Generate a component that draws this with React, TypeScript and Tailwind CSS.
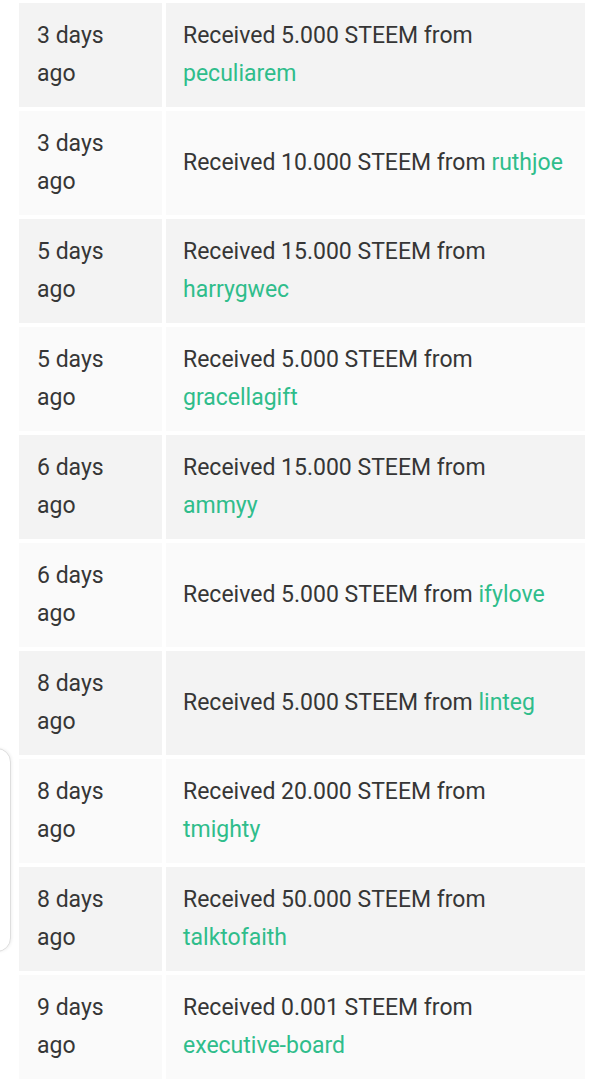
const rows: { when: string; amount: string; from: string; wrap: boolean }[] = [
  { when: '3 days ago', amount: '5.000', from: 'peculiarem', wrap: true },
  { when: '3 days ago', amount: '10.000', from: 'ruthjoe', wrap: false },
  { when: '5 days ago', amount: '15.000', from: 'harrygwec', wrap: true },
  { when: '5 days ago', amount: '5.000', from: 'gracellagift', wrap: true },
  { when: '6 days ago', amount: '15.000', from: 'ammyy', wrap: true },
  { when: '6 days ago', amount: '5.000', from: 'ifylove', wrap: false },
  { when: '8 days ago', amount: '5.000', from: 'linteg', wrap: false },
  { when: '8 days ago', amount: '20.000', from: 'tmighty', wrap: true },
  { when: '8 days ago', amount: '50.000', from: 'talktofaith', wrap: true },
  { when: '9 days ago', amount: '0.001', from: 'executive-board', wrap: true },
]

export default function App() {
  return (
    <div
      className="relative w-[599px] h-[1080px] overflow-hidden bg-white text-[23px] leading-[38px] text-[#363636]"
      style={{ fontFamily: 'Roboto, "Noto Sans", sans-serif' }}
    >
      {/* edge of a card peeking in from the left */}
      <div className="absolute left-[-22px] top-[748px] w-[33px] h-[204px] rounded-r-[14px] border border-[#dedede] bg-white shadow-[1px_0_3px_rgba(0,0,0,0.06)]" />

      <div className="ml-[19px] mt-[3px] w-[566px] flex flex-col gap-[4px]">
        {rows.map((r, i) => {
          const bg = i % 2 === 0 ? 'bg-[#f3f3f3]' : 'bg-[#fafafa]'
          return (
            <div key={i} className="grid grid-cols-[143px_1fr] gap-[4px] h-[104px]">
              <div className={`${bg} flex items-center pl-[18px] pr-2`}>
                <span className="w-[80px]">{r.when}</span>
              </div>
              <div className={`${bg} flex items-center pl-[17px] pr-[12px]`}>
                <span className="whitespace-nowrap">
                  Received {r.amount} STEEM from
                  {r.wrap ? <br /> : ' '}
                  <span className="text-[#2fbd8b]">{r.from}</span>
                </span>
              </div>
            </div>
          )
        })}
      </div>
    </div>
  )
}
